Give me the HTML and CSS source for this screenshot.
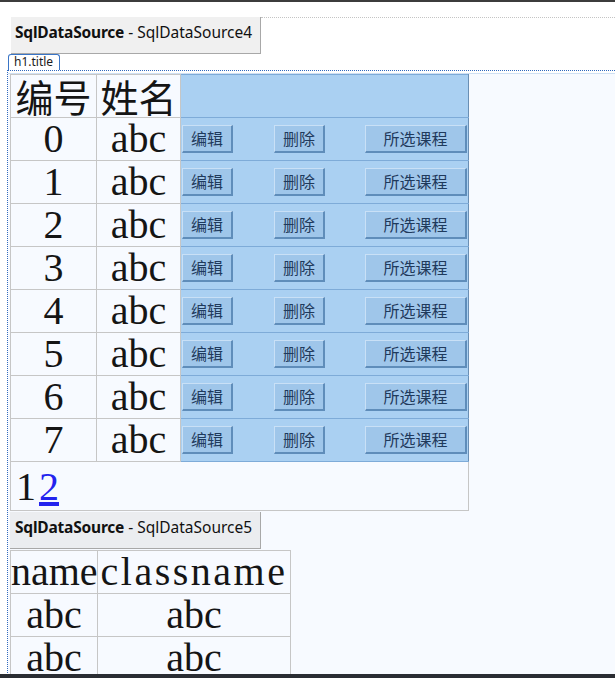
FILE: index.html
```html
<!DOCTYPE html>
<html>
<head>
<meta charset="utf-8">
<link rel="stylesheet" href="styles.css">
</head>
<body>
<div class="topbar"></div>
<div class="ds-row">
  <div class="ds-head"><b>SqlDataSource</b> - SqlDataSource4</div>
  <div class="ds-fill"></div>
</div>
<div class="tab">h1.title</div>
<div class="frame">
  <div class="surface">
    <table class="grid1">
      <colgroup><col class="c1"><col class="c2"><col class="c3"></colgroup>
      <tr><th class="cjk">编号</th><th class="cjk">姓名</th><th class="act"></th></tr>
      <tr><td>0</td><td>abc</td><td class="act"><div class="btns"><span class="btn">编辑</span><span class="btn">删除</span><span class="btn wide">所选课程</span></div></td></tr>
      <tr><td>1</td><td>abc</td><td class="act"><div class="btns"><span class="btn">编辑</span><span class="btn">删除</span><span class="btn wide">所选课程</span></div></td></tr>
      <tr><td>2</td><td>abc</td><td class="act"><div class="btns"><span class="btn">编辑</span><span class="btn">删除</span><span class="btn wide">所选课程</span></div></td></tr>
      <tr><td>3</td><td>abc</td><td class="act"><div class="btns"><span class="btn">编辑</span><span class="btn">删除</span><span class="btn wide">所选课程</span></div></td></tr>
      <tr><td>4</td><td>abc</td><td class="act"><div class="btns"><span class="btn">编辑</span><span class="btn">删除</span><span class="btn wide">所选课程</span></div></td></tr>
      <tr><td>5</td><td>abc</td><td class="act"><div class="btns"><span class="btn">编辑</span><span class="btn">删除</span><span class="btn wide">所选课程</span></div></td></tr>
      <tr><td>6</td><td>abc</td><td class="act"><div class="btns"><span class="btn">编辑</span><span class="btn">删除</span><span class="btn wide">所选课程</span></div></td></tr>
      <tr><td>7</td><td>abc</td><td class="act"><div class="btns"><span class="btn">编辑</span><span class="btn">删除</span><span class="btn wide">所选课程</span></div></td></tr>
      <tr class="pager"><td colspan="3"><span class="pg">1</span><a class="pg link" href="#">2</a></td></tr>
    </table>
    <div class="ds-head ds2"><b>SqlDataSource</b> - SqlDataSource5</div>
    <table class="grid2">
      <colgroup><col class="d1"><col class="d2"></colgroup>
      <tr><th>name</th><th class="spread">classname</th></tr>
      <tr><td>abc</td><td>abc</td></tr>
      <tr><td>abc</td><td>abc</td></tr>
    </table>
  </div>
</div>
<div class="bottombar"></div>
</body>
</html>
```
FILE: styles.css
```css
html, body {
  margin: 0;
  padding: 0;
  background: #ffffff;
  overflow: hidden;
}
body {
  width: 615px;
  height: 678px;
  font-family: "Liberation Serif", "Noto Sans CJK SC", serif;
}
.topbar {
  height: 2px;
  background: #3c3c3c;
}
.bottombar {
  position: fixed;
  left: 0;
  right: 0;
  bottom: 0;
  height: 4px;
  background: #2a2d33;
}
.ds-row {
  display: flex;
  margin-top: 15px;
  padding-left: 11px;
}
.ds-fill {
  flex: 1;
  border-top: 1px dotted #c4c4c4;
}
.ds-head {
  box-sizing: border-box;
  width: 250px;
  height: 37px;
  padding: 5px 0 0 4px;
  background: #f0f0f0;
  border-right: 1px solid #a8a8a8;
  border-bottom: 1px solid #a8a8a8;
  font-family: "Noto Sans", "Open Sans", sans-serif;
  font-size: 15.5px;
  line-height: 20px;
  color: #111;
  white-space: nowrap;
}
.ds-head b {
  font-weight: 700;
  letter-spacing: -0.2px;
}
.ds2 {
  width: 251px;
  margin-top: 1px;
  margin-bottom: 1px;
  padding-left: 5px;
  background: #ebedf0;
}
.tab {
  box-sizing: border-box;
  width: 52px;
  height: 16px;
  margin-left: 8px;
  padding-left: 5px;
  border: 1px solid #3a75c6;
  border-bottom: none;
  border-radius: 3px 3px 0 0;
  background: #ffffff;
  font-family: "Noto Sans", sans-serif;
  font-size: 12px;
  line-height: 14px;
  color: #1a1a1a;
}
.frame {
  margin-left: 7px;
  padding-top: 2px;
  border-top: 1px dotted #2f68bd;
  border-left: 1px dotted #2f68bd;
}
.surface {
  height: 605px;
  padding-left: 2px;
  background: #f7faff;
  border-top: 1px solid #cfe0f3;
  overflow: hidden;
}
table {
  border-collapse: collapse;
  table-layout: fixed;
}
th, td {
  padding: 0;
  font-weight: normal;
  text-align: center;
  font-size: 40px;
  line-height: 42px;
  height: 42px;
  color: #151515;
  border: 1px solid #c6c6c6;
  white-space: nowrap;
}
.cjk {
  font-family: "Noto Sans CJK SC", sans-serif;
  font-size: 38px;
  line-height: 42px;
}
.grid1 {
  width: 458px;
  border: 1px solid #a8a8a8;
}
.c1 { width: 86px; }
.c2 { width: 84px; }
.c3 { width: 288px; }
.grid1 .act {
  background: #aad0f2;
  border-color: #7eabd8;
  border-left: 1px solid #6f9fd0;
  border-right: 1px solid #6a8fb4;
  padding-left: 1px;
}
.btns {
  display: grid;
  grid-template-columns: 92px 91px 1fr;
  align-items: center;
}
.btn {
  box-sizing: border-box;
  display: block;
  width: 51px;
  height: 28px;
  background: #9fc6ea;
  border-style: solid;
  border-width: 1px 2px 2px 1px;
  border-color: #c9e0f6 #5f8dba #5f8dba #c9e0f6;
  font-family: "Noto Sans CJK SC", sans-serif;
  font-size: 16px;
  line-height: 25px;
  color: #1f3a5c;
  text-align: center;
}
.btn.wide {
  width: 102px;
}
.pager td {
  height: 48px;
  line-height: 46px;
  text-align: left;
  padding: 2px 0 0 5px;
  box-sizing: border-box;
  background: #f7faff;
}
.link {
  margin-left: 3px;
  color: #2323ee;
  text-decoration: underline;
}
.grid2 {
  width: 280px;
  border: 1px solid #b4b4b4;
}
.d1 { width: 87px; }
.d2 { width: 193px; }
.spread {
  letter-spacing: 2.5px;
}
```
